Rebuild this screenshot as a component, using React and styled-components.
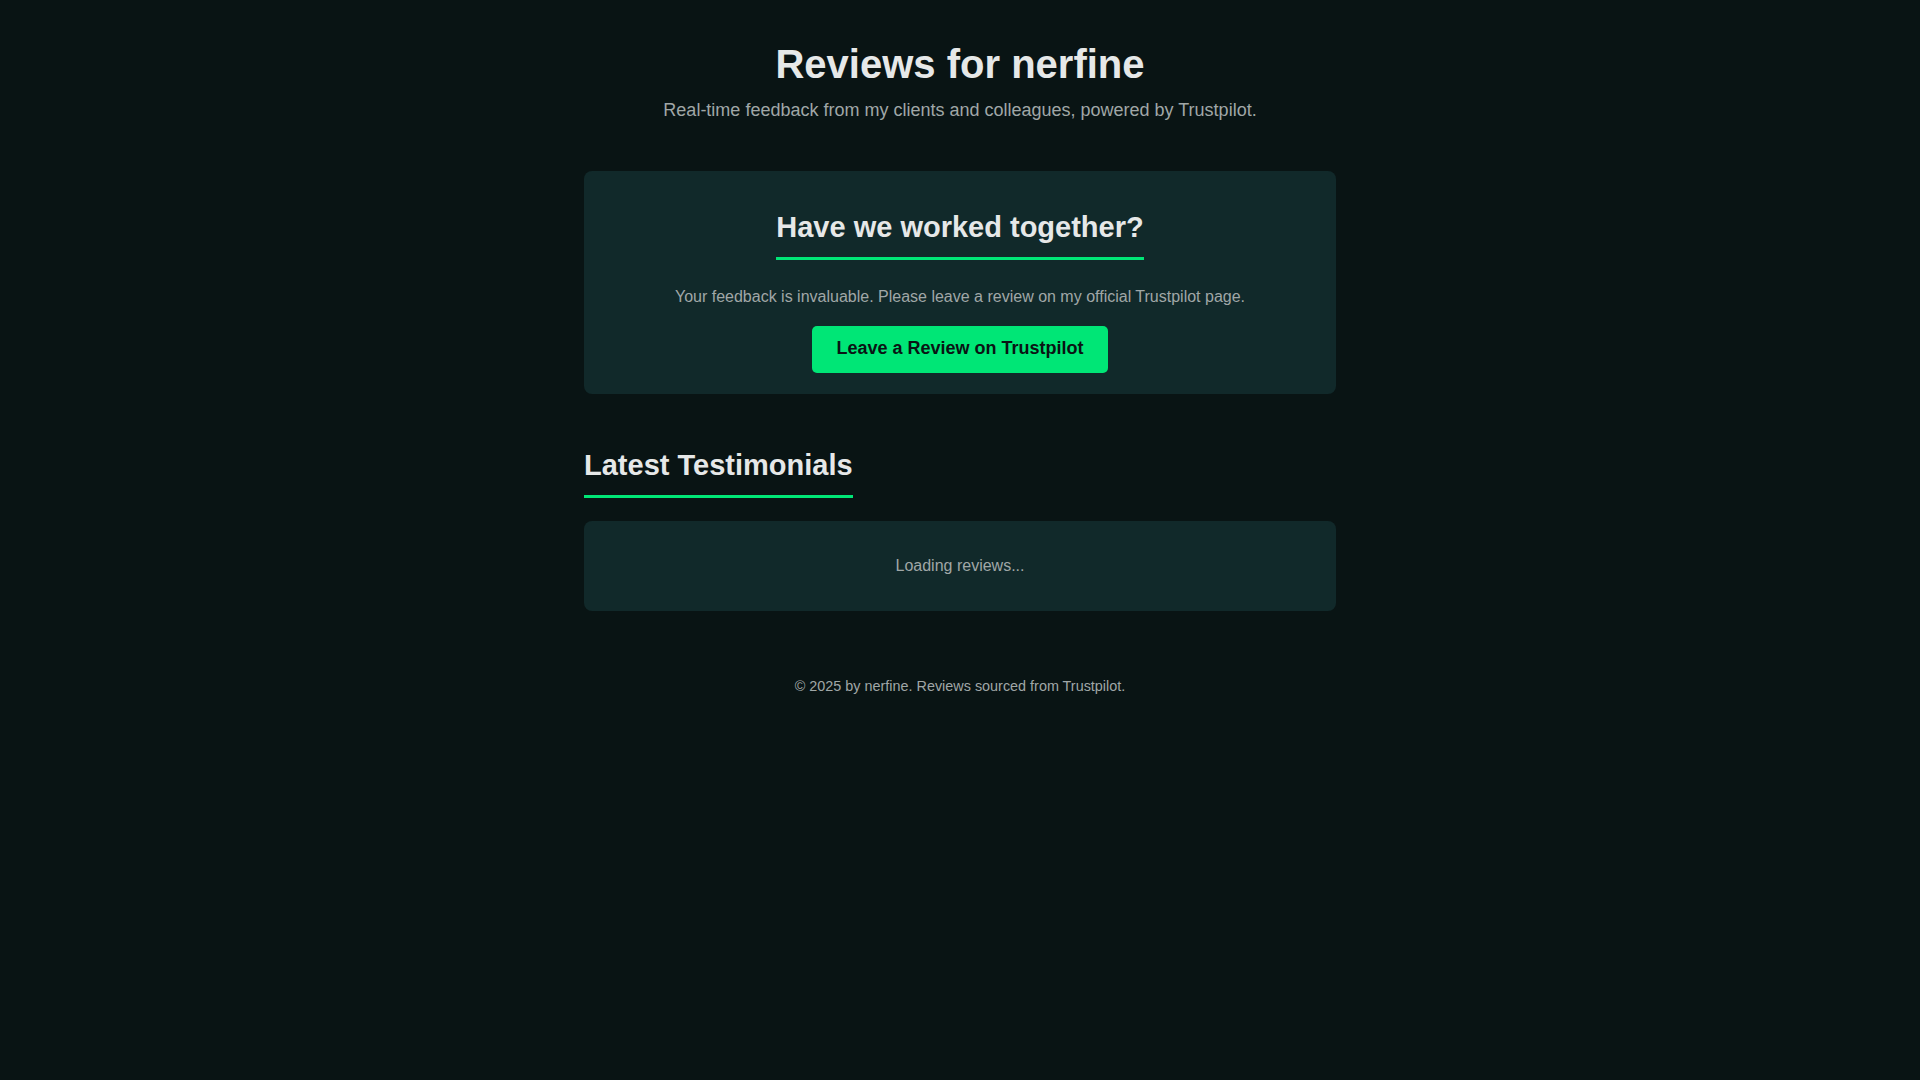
import React from "react";
import styled, { createGlobalStyle } from "styled-components";

const GlobalStyle = createGlobalStyle`
  html, body {
    margin: 0;
    padding: 0;
    background: #091414;
    color: #e6e8e8;
    font-family: "Liberation Sans", Arial, sans-serif;
  }
  * { box-sizing: border-box; }
`;

const Page = styled.div`
  max-width: 800px;
  margin: 0 auto;
  padding: 40px 24px 40px;
`;

const Header = styled.header`
  text-align: center;
  margin-bottom: 47px;
  h1 {
    margin: 0;
    font-size: 40px;
    line-height: 48px;
    font-weight: 700;
    color: #e6e8e8;
  }
  p {
    margin: 8px 0 0;
    font-size: 18px;
    line-height: 28px;
    color: #a0a7a7;
  }
`;

const Card = styled.section`
  background: #11292a;
  border-radius: 8px;
  text-align: center;
  padding: ${(p) => p.$pad || "24px 24px 21px"};
`;

const SectionTitle = styled.h2`
  display: inline-block;
  margin: ${(p) => p.$margin || "0"};
  padding-bottom: 12px;
  border-bottom: 3px solid #00e676;
  font-size: 29px;
  line-height: 35px;
  font-weight: 700;
  color: #e6e8e8;
`;

const Text = styled.p`
  margin: ${(p) => p.$margin || "0"};
  font-size: ${(p) => p.$size || "16px"};
  line-height: 1.6;
  color: #a0a7a7;
`;

const ButtonRow = styled.div`
  display: flex;
  justify-content: center;
`;

const ReviewButton = styled.a`
  display: block;
  padding: 12.8px 24px;
  background: #00e676;
  color: #0a1414;
  font-size: 18px;
  line-height: 21.6px;
  font-weight: 700;
  border-radius: 5px;
  text-decoration: none;
  cursor: pointer;
`;

const Testimonials = styled.section`
  margin-top: 54px;
`;

const LoadingCard = styled(Card)`
  margin-top: 23px;
`;

const Footer = styled.footer`
  margin-top: 64px;
  text-align: center;
`;

export default function App() {
  return (
    <>
      <GlobalStyle />
      <Page>
        <Header>
          <h1>Reviews for nerfine</h1>
          <p>Real-time feedback from my clients and colleagues, powered by Trustpilot.</p>
        </Header>

        <Card>
          <SectionTitle $margin="15px 0 0">Have we worked together?</SectionTitle>
          <Text $margin="24px 0 16px">
            Your feedback is invaluable. Please leave a review on my official Trustpilot page.
          </Text>
          <ButtonRow>
            <ReviewButton>Leave a Review on Trustpilot</ReviewButton>
          </ButtonRow>
        </Card>

        <Testimonials>
          <SectionTitle>Latest Testimonials</SectionTitle>
          <LoadingCard $pad="32px 24px 33px">
            <Text>Loading reviews...</Text>
          </LoadingCard>
        </Testimonials>

        <Footer>
          <Text $size="14.4px">© 2025 by nerfine. Reviews sourced from Trustpilot.</Text>
        </Footer>
      </Page>
    </>
  );
}
